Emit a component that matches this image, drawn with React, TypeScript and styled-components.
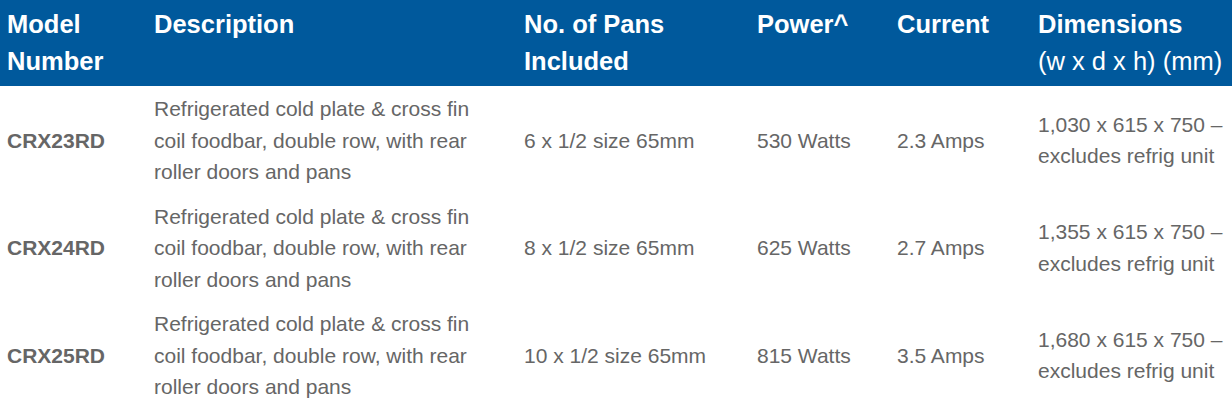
import React, { FC } from 'react';
import styled, { createGlobalStyle } from 'styled-components';

const GlobalStyle = createGlobalStyle`
  html, body {
    margin: 0;
    padding: 0;
    background: #ffffff;
  }

  body {
    font-family: "Liberation Sans", Arial, sans-serif;
  }
`;

const SpecTable = styled.table`
  width: 1232px;
  table-layout: fixed;
  border-collapse: collapse;
  border-spacing: 0;
`;

const HeadRow = styled.tr`
  background: #00599c;
  height: 86px;
`;

const HeadCell = styled.th`
  padding: 6px 7px 6px;

  vertical-align: top;
  text-align: left;

  color: #ffffff;
  font-size: 25.5px;
  font-weight: 700;
  line-height: 37px;
`;

const HeadNote = styled.span`
  display: block;
  font-weight: 400;
`;

const BodyRow = styled.tr`
  height: 107px;
`;

const Cell = styled.td<{ $bold?: boolean; $padRight?: number }>`
  padding: 7px ${ p => p.$padRight ?? 7 }px 6px 7px;

  vertical-align: middle;

  color: #666666;
  font-size: 21px;
  font-weight: ${ p => p.$bold ? 700 : 400 };
  line-height: 31.5px;
`;

type rowType = {
	model: string,
	pans: string,
	power: string,
	current: string,
	dimensions: string,
};

const DESCRIPTION = 'Refrigerated cold plate & cross fin coil foodbar, double row, with rear roller doors and pans';

const rows: rowType[] = [
	{ model: 'CRX23RD', pans: '6 x 1/2 size 65mm', power: '530 Watts', current: '2.3 Amps', dimensions: '1,030 x 615 x 750 – excludes refrig unit' },
	{ model: 'CRX24RD', pans: '8 x 1/2 size 65mm', power: '625 Watts', current: '2.7 Amps', dimensions: '1,355 x 615 x 750 – excludes refrig unit' },
	{ model: 'CRX25RD', pans: '10 x 1/2 size 65mm', power: '815 Watts', current: '3.5 Amps', dimensions: '1,680 x 615 x 750 – excludes refrig unit' },
];

const App: FC = () => {
	return (
		<>
			<GlobalStyle />
			<SpecTable>
				<colgroup>
					<col style={ { width: 147 } } />
					<col style={ { width: 370 } } />
					<col style={ { width: 233 } } />
					<col style={ { width: 140 } } />
					<col style={ { width: 141 } } />
					<col style={ { width: 201 } } />
				</colgroup>
				<thead>
					<HeadRow>
						<HeadCell>Model Number</HeadCell>
						<HeadCell>Description</HeadCell>
						<HeadCell>No. of Pans Included</HeadCell>
						<HeadCell>Power^</HeadCell>
						<HeadCell>Current</HeadCell>
						<HeadCell>
							Dimensions
							<HeadNote>(w x d x h) (mm)</HeadNote>
						</HeadCell>
					</HeadRow>
				</thead>
				<tbody>
					{ rows.map(row => (
						<BodyRow key={ row.model }>
							<Cell $bold>{ row.model }</Cell>
							<Cell $padRight={ 40 }>{ DESCRIPTION }</Cell>
							<Cell>{ row.pans }</Cell>
							<Cell>{ row.power }</Cell>
							<Cell>{ row.current }</Cell>
							<Cell $padRight={ 0 }>{ row.dimensions }</Cell>
						</BodyRow>
					)) }
				</tbody>
			</SpecTable>
		</>
	);
};

export default App;
